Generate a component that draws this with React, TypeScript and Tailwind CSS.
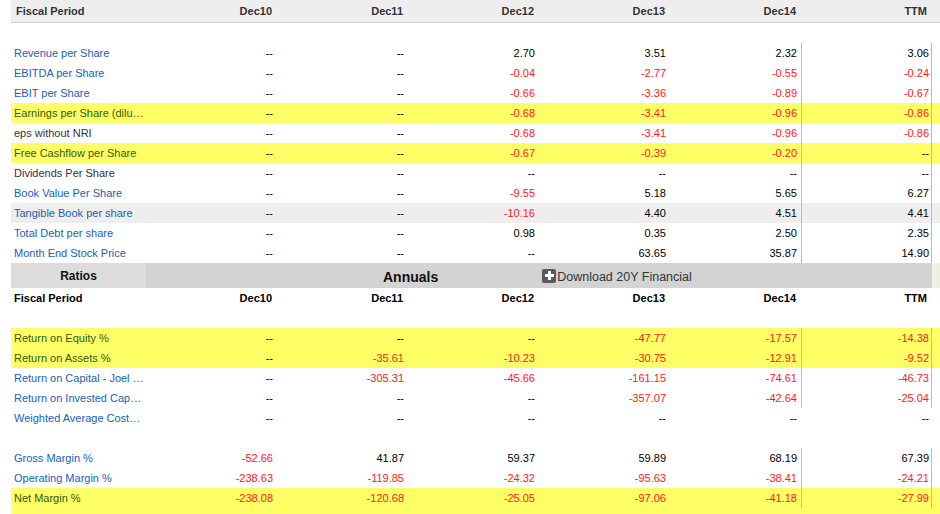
// Fiscal ratios table

type Row = {
    label: string
    values: string[]
    tone?: "yellow" | "gray"
    dark?: boolean
    lines?: boolean
}

const perShare: Row[] = [
    { label: "Revenue per Share", values: ["--", "--", "2.70", "3.51", "2.32", "3.06"] },
    { label: "EBITDA per Share", values: ["--", "--", "-0.04", "-2.77", "-0.55", "-0.24"] },
    { label: "EBIT per Share", values: ["--", "--", "-0.66", "-3.36", "-0.89", "-0.67"] },
    { label: "Earnings per Share (dilu\u2026", values: ["--", "--", "-0.68", "-3.41", "-0.96", "-0.86"], tone: "yellow" },
    { label: "eps without NRI", values: ["--", "--", "-0.68", "-3.41", "-0.96", "-0.86"], dark: true },
    { label: "Free Cashflow per Share", values: ["--", "--", "-0.67", "-0.39", "-0.20", "--"], tone: "yellow" },
    { label: "Dividends Per Share", values: ["--", "--", "--", "--", "--", "--"], dark: true },
    { label: "Book Value Per Share", values: ["--", "--", "-9.55", "5.18", "5.65", "6.27"] },
    { label: "Tangible Book per share", values: ["--", "--", "-10.16", "4.40", "4.51", "4.41"], tone: "gray" },
    { label: "Total Debt per share", values: ["--", "--", "0.98", "0.35", "2.50", "2.35"] },
    { label: "Month End Stock Price", values: ["--", "--", "--", "63.65", "35.87", "14.90"] },
]

const returns: Row[] = [
    { label: "Return on Equity %", values: ["--", "--", "--", "-47.77", "-17.57", "-14.38"], tone: "yellow" },
    { label: "Return on Assets %", values: ["--", "-35.61", "-10.23", "-30.75", "-12.91", "-9.52"], tone: "yellow" },
    { label: "Return on Capital - Joel \u2026", values: ["--", "-305.31", "-45.66", "-161.15", "-74.61", "-46.73"] },
    { label: "Return on Invested Cap\u2026", values: ["--", "--", "--", "-357.07", "-42.64", "-25.04"] },
    { label: "Weighted Average Cost\u2026", values: ["--", "--", "--", "--", "--", "--"], lines: false },
]

const margins: Row[] = [
    { label: "Gross Margin %", values: ["-52.66", "41.87", "59.37", "59.89", "68.19", "67.39"] },
    { label: "Operating Margin %", values: ["-238.63", "-119.85", "-24.32", "-95.63", "-38.41", "-24.21"] },
    { label: "Net Margin %", values: ["-238.08", "-120.68", "-25.05", "-97.06", "-41.18", "-27.99"], tone: "yellow" },
]

const periods = ["Dec10", "Dec11", "Dec12", "Dec13", "Dec14", "TTM"]

const grid = "grid grid-cols-[135px_131px_131px_131px_131px_131px_131px_8px]"

const DataRow = ({ label, values, tone, dark, lines = true, tall }: Row & { tall?: boolean }) => {
    const bg = tone === "yellow" ? "bg-[#ffff66]" : tone === "gray" ? "bg-[#eeeeee]" : "bg-white"
    const labelColor = tone === "yellow" ? "text-[#2f5d0c]" : dark ? "text-[#333333]" : "text-[#1c5fae]"
    return (
        <div className={`${grid} ${bg} ${tall ? "h-[26px] grid-rows-[20px]" : "h-[20px]"}`}>
            <div className={`flex items-center pl-[3px] whitespace-nowrap ${labelColor}`}>{label}</div>
            {values.map((v, i) => (
                <div
                key={i}
                className={`flex items-center justify-end ${v.startsWith("-") && v !== "--" ? "text-[#ff1a1a]" : "text-black"} ${i === 5 ? (lines ? "pr-[2px] border-x border-[#bbbbbb]" : "pr-[3px]") : "pr-[4px]"}`}>
                    {v}
                </div>
            ))}
            <div />
        </div>
    )
}

const Blank = () => <div className="h-[20px] bg-white" />

export default function App() {
    return (
        <div className="w-[940px] h-[514px] overflow-hidden bg-white pl-[11px] text-[11px] leading-none font-['Liberation_Sans',Arial,sans-serif]">
            {/* Header */}
            <div className="grid grid-cols-[135px_131px_131px_131px_131px_131px_131px_18px] h-[23px] bg-[#eeeeee] border-b border-[#cccccc] font-bold text-[#333333] -mr-[10px]">
                <div className="flex items-center pl-[5px]">Fiscal Period</div>
                {periods.map((p) => (
                    <div key={p} className="flex items-center justify-end pr-[5px]">{p}</div>
                ))}
                <div />
            </div>

            <Blank />
            {perShare.map((r) => (
                <DataRow key={r.label} {...r} />
            ))}

            {/* Ratios / Annuals bar */}
            <div className="flex h-[25px]">
                <div className="w-[135px] bg-[#dcdcdc] flex items-center justify-center font-bold text-[12px] text-[#111111]">Ratios</div>
                <div className="w-[786px] bg-[#d3d3d3] flex items-center pt-[3px]">
                    <span className="ml-[237px] font-bold text-[14px] text-[#111111]">Annuals</span>
                    <span className="ml-[104px] flex items-center text-[12.5px] text-[#333333]">
                        <span className="w-[14px] h-[14px] rounded-[2px] bg-[#5a5a5a] flex items-center justify-center mb-[3px]">
                            <svg width="9" height="9" viewBox="0 0 9 9">
                                <rect x="3" y="0" width="3" height="9" fill="#fff" />
                                <rect x="0" y="3" width="9" height="3" fill="#fff" />
                            </svg>
                        </span>
                        <span className="ml-[1px]">Download 20Y Financial</span>
                    </span>
                </div>
                <div className="w-[8px] bg-[#f0f0e2]" />
            </div>

            {/* Second header */}
            <div className={`${grid} h-[20px] font-bold text-black`}>
                <div className="flex items-center pl-[3px]">Fiscal Period</div>
                {periods.map((p) => (
                    <div key={p} className="flex items-center justify-end pr-[5px]">{p}</div>
                ))}
                <div />
            </div>

            <Blank />
            {returns.map((r) => (
                <DataRow key={r.label} {...r} />
            ))}
            <Blank />
            {margins.map((r, i) => (
                <DataRow key={r.label} {...r} tall={i === margins.length - 1} />
            ))}
        </div>
    )
}
